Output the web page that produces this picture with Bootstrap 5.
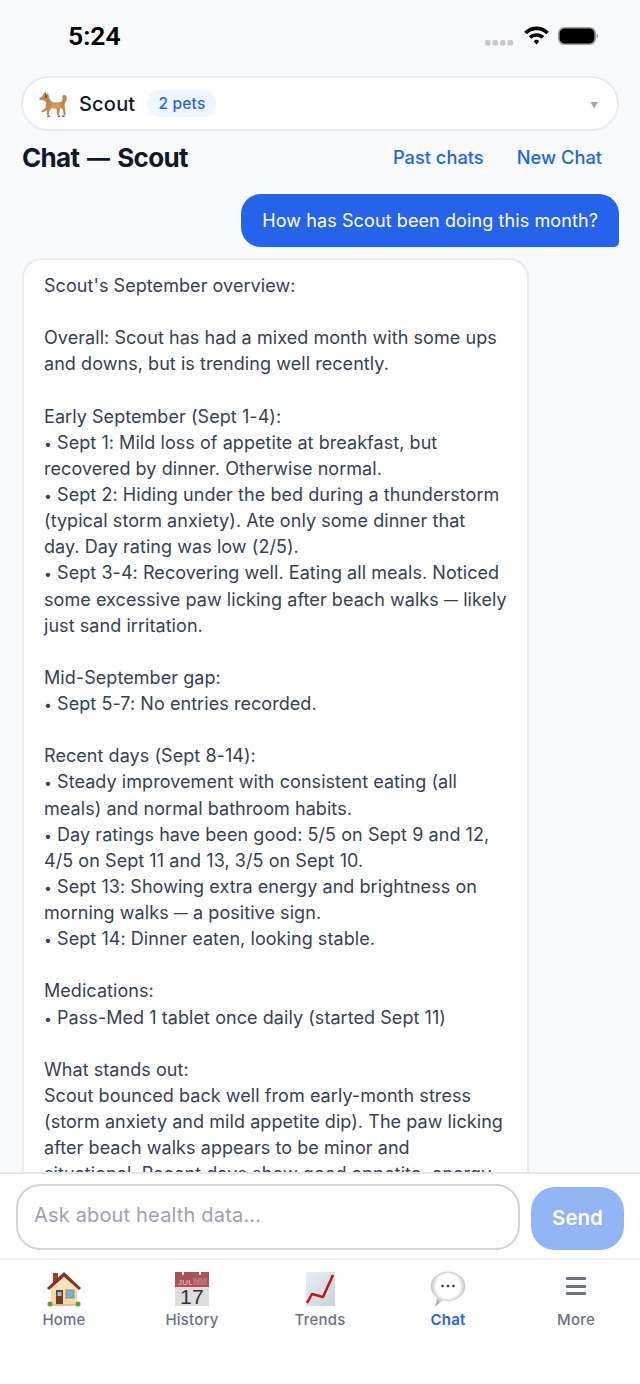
<!DOCTYPE html>
<html lang="en"><head><meta charset="utf-8">
<link href="https://cdn.jsdelivr.net/npm/bootstrap@5.3.0/dist/css/bootstrap.min.css" rel="stylesheet">
<style>
html,body{height:1384px;overflow:hidden}
body{font-family:Inter,"Liberation Sans",sans-serif;background:#f8fafc;color:#0f172a;width:640px}
.app-shell{height:1384px}
.status-bar{height:76px;padding:0 40px 0 68px}
.clock{font-size:26.5px;font-weight:600;color:#000;line-height:1;margin-top:23px;font-family:Roboto,Inter,sans-serif}
.status-icons{margin-top:24px}
.pet-pill{height:55px;margin:0 21px;background:#fff;border:2px solid #e8ebef;border-radius:28px;padding:0 18px 0 15px}
.pet-name{font-size:20px;font-weight:500;margin-left:11px;letter-spacing:.2px;color:#111827}
.pet-count{font-size:15.5px;font-weight:500;color:#2563eb;background:#eff6ff;border-radius:13px;padding:2px 11px;margin-left:12px;letter-spacing:.2px}
.caret{font-size:8px;color:#9ca3af;margin-right:1px;padding-top:2px}
.title-row{margin:0 38px 0 22px;height:54px}
.page-title{font-size:26px;font-weight:700;margin:0;color:#111827;letter-spacing:-.7px;word-spacing:2.4px}
.title-dash{font-size:23px;line-height:0;vertical-align:1px}
.head-link{font-size:18.3px;font-weight:500;color:#2563eb;text-decoration:none}
.head-gap{gap:33px}
.chat-scroll{flex:1 1 auto;min-height:0;overflow:hidden;padding:9px 21px 0 22px}
.user-bubble{background:#2563eb;color:#fff;font-size:18px;border-radius:20px 20px 5px 20px;padding:14px 21px 13px;line-height:26px;width:max-content;letter-spacing:.1px}
.bot-bubble{background:#fff;border:2px solid #e8ebef;border-radius:20px;width:507px;margin-top:11px;padding:13px 20px;font-size:18px;line-height:26.12px;color:#374151;white-space:pre;letter-spacing:.06px}
.dot{font-size:14px;line-height:0}
.emd{font-size:14px;line-height:0;vertical-align:1px}
.composer{height:88px;background:#fff;border-top:2px solid #e5e7eb;border-bottom:2px solid #f3f4f6;padding:0 16px}
.ask-field{width:504px;height:66px;margin-top:1px;border:2px solid #d1d5db;border-radius:24px;padding:0 16px 3px;font-size:20px;color:#9ca3af;display:flex;align-items:center;letter-spacing:.17px}
.send-btn{width:93px;height:63px;background:#93b4f5;color:#fff;border-radius:24px;font-size:20.5px;font-weight:600;margin-left:11px;margin-top:5px;display:flex;align-items:center;justify-content:center}
.tabbar{height:124px;background:#fff;padding:11px 0 0 0}
.tab-item{width:128px;font-size:15px;font-weight:500;color:#6b7280;line-height:18px;letter-spacing:.2px}
.tab-item svg{display:block;margin:0 auto 4px}
.tab-on{color:#2563eb;font-weight:600}
</style></head><body>
<div class="app-shell d-flex flex-column">
<div class="status-bar d-flex justify-content-between align-items-start flex-shrink-0">
 <div class="clock">5:24</div>
 <svg class="status-icons" width="116" height="28" viewBox="0 0 116 28">
  <g fill="#c8c8ca"><rect x="1" y="16" width="5.500" height="5.500" rx="1.500"/><rect x="8.500" y="16" width="5.500" height="5.500" rx="1.500"/><rect x="16" y="16" width="5.500" height="5.500" rx="1.500"/><rect x="23.500" y="16" width="5.500" height="5.500" rx="1.500"/></g>
  <g fill="none" stroke="#000" stroke-width="3.600"><path d="M41.500 9A15.500 15.500 0 0 1 63.500 9"/><path d="M46.100 13.600A9 9 0 0 1 58.900 13.600"/></g>
  <path d="M49.700 17.200L52.500 20.500 55.300 17.200A4 4 0 0 0 49.700 17.200z" fill="#000"/>
  <rect x="74.800" y="3.800" width="36.400" height="16.400" rx="5.500" fill="#000"/>
  <rect x="74.800" y="3.800" width="36.400" height="16.400" rx="5.500" fill="none" stroke="#a3a3a3" stroke-width="1.600"/>
  <path d="M112.600 9.500v5c.8-.4 1.300-1.300 1.300-2.500s-.5-2.100-1.300-2.500z" fill="#8f8f8f"/>
 </svg>
</div>
<div class="pet-pill d-flex align-items-center flex-shrink-0">
 <svg width="30" height="28" viewBox="0 0 30 28"><path d="M7 2l1.500 2.500L10 3l1.200 5 2.800 4c3.500.8 6 .8 8.500 0 1.500-.8 2.500-2.500 1.800-4.800-.4-1.300.8-2.700 2.500-2.200 2 .6 2.500 3 1.700 5-.5 1.500-1.500 3-2 4.500l.5 4 .8 6.500h-2l-1.300-6-2.300-1.500-1.300 7.500h-2l-.2-6-5-1.500-2.500 4-.5 3.500h-2l.2-5-4.200 2.500-1.500-1 4.300-3.700.7-5.500L6 10.500l-4-.5-.8-1.500L4 6.500z" fill="#c18a4f"/><path d="M7 2l1.500 2.500 1 4-2.500-.5z" fill="#8a5a2c"/><path d="M13 13c3 1 6 1 9 0l1 5-9 .5z" fill="#d19a5c"/><path d="M9.500 25.500h2.300v1.300H9zM20 25.500h2.300v1.300h-2.800zM24.300 25.500h2.300v1.300h-2.800z" fill="#5d3b1e"/></svg>
 <span class="pet-name">Scout</span>
 <span class="pet-count">2 pets</span>
 <span class="caret ms-auto">▼</span>
</div>
<div class="title-row d-flex justify-content-between align-items-center flex-shrink-0">
 <h1 class="page-title">Chat <span class="title-dash">—</span> Scout</h1>
 <div class="d-flex head-gap"><a class="head-link" href="#">Past chats</a><a class="head-link" href="#">New Chat</a></div>
</div>
<div class="chat-scroll">
 <div class="user-bubble ms-auto">How has Scout been doing this month?</div>
 <div class="bot-bubble">Scout's September overview:

Overall: Scout has had a mixed month with some ups
and downs, but is trending well recently.

Early September (Sept 1-4):
<span class="dot">•</span> Sept 1: Mild loss of appetite at breakfast, but
recovered by dinner. Otherwise normal.
<span class="dot">•</span> Sept 2: Hiding under the bed during a thunderstorm
(typical storm anxiety). Ate only some dinner that
day. Day rating was low (2/5).
<span class="dot">•</span> Sept 3-4: Recovering well. Eating all meals. Noticed
some excessive paw licking after beach walks <span class="emd">—</span> likely
just sand irritation.

Mid-September gap:
<span class="dot">•</span> Sept 5-7: No entries recorded.

Recent days (Sept 8-14):
<span class="dot">•</span> Steady improvement with consistent eating (all
meals) and normal bathroom habits.
<span class="dot">•</span> Day ratings have been good: 5/5 on Sept 9 and 12,
4/5 on Sept 11 and 13, 3/5 on Sept 10.
<span class="dot">•</span> Sept 13: Showing extra energy and brightness on
morning walks <span class="emd">—</span> a positive sign.
<span class="dot">•</span> Sept 14: Dinner eaten, looking stable.

Medications:
<span class="dot">•</span> Pass-Med 1 tablet once daily (started Sept 11)

What stands out:
Scout bounced back well from early-month stress
(storm anxiety and mild appetite dip). The paw licking
after beach walks appears to be minor and
situational. Recent days show good appetite, energy</div>
</div>
<div class="composer d-flex align-items-center flex-shrink-0">
 <div class="ask-field">Ask about health data...</div>
 <div class="send-btn">Send</div>
</div>
<div class="tabbar d-flex flex-shrink-0 text-center">
 <div class="tab-item"><svg width="34" height="36" viewBox="0 0 34 36"><rect x="4" y="14" width="26" height="20" fill="#f1d9a8"/><rect x="6" y="2" width="5" height="10" fill="#a83a2c"/><path d="M17 1L0 17l2 2L17 6l15 13 2-2z" fill="#8f2f24"/><path d="M17 6L5 17v3h24v-3z" fill="#f6e3bd"/><rect x="9" y="19" width="7" height="15" fill="#7a3b22"/><rect x="10.500" y="21" width="4" height="4" fill="#8fc4e6"/><rect x="19" y="19" width="8" height="8" fill="#6fb1df" stroke="#a9895a"/><rect x="3" y="33" width="28" height="2" fill="#d9c08c"/><circle cx="3" cy="33" r="2.500" fill="#5d9a3a"/><circle cx="31" cy="33" r="2.500" fill="#5d9a3a"/></svg>Home</div>
 <div class="tab-item"><svg width="36" height="36" viewBox="0 0 36 36"><rect x="1" y="1" width="34" height="34" fill="#dedede"/><rect x="1" y="1" width="34" height="15" fill="#a9525a"/><path d="M9 1v3M26 1v3" stroke="#f2f2f2" stroke-width="2"/><path d="M20 7v7M22 7v7M24 7v7M26 7v7M28 7v7M30 7v7M32 7v7" stroke="#c98a90"/><text x="4" y="14" font-size="8" fill="#e8cccc" font-family="Liberation Sans">JUL</text><text x="18" y="33" text-anchor="middle" font-size="21" fill="#333" font-family="Liberation Sans">17</text></svg>History</div>
 <div class="tab-item"><svg width="36" height="36" viewBox="0 0 36 36"><defs><linearGradient id="cg" x1="0" y1="0" x2="1" y2="1"><stop offset="0" stop-color="#e8edf2"/><stop offset="1" stop-color="#c9d3dd"/></linearGradient></defs><rect x="4" y="1" width="29" height="34" fill="url(#cg)"/><path d="M5 32l5-9 11 3 10-22" fill="none" stroke="#c0141a" stroke-width="2.500" stroke-linejoin="round"/></svg>Trends</div>
 <div class="tab-item tab-on"><svg width="36" height="36" viewBox="0 0 36 36"><defs><radialGradient id="bg" cx=".5" cy=".42" r=".62"><stop offset=".55" stop-color="#fff"/><stop offset="1" stop-color="#8f949c"/></radialGradient></defs><path d="M18 1c9.500 0 17 6.300 17 14s-7.500 14.500-17 14.500c-1.800 0-3.500-.2-5-.7L5.500 35l2-8.500C3.500 23.500 1 19.500 1 15 1 7.300 8.500 1 18 1z" fill="url(#bg)" stroke="#c5c8cd" stroke-width=".8"/><g fill="#333"><circle cx="12.500" cy="15" r="1.300"/><circle cx="18" cy="15" r="1.300"/><circle cx="23.500" cy="15" r="1.300"/></g></svg>Chat</div>
 <div class="tab-item"><svg width="22" height="36" viewBox="0 0 22 36"><g fill="#6b7280"><rect x="1" y="6" width="20" height="3" rx="1"/><rect x="1" y="14" width="20" height="3" rx="1"/><rect x="1" y="21" width="20" height="3" rx="1"/></g></svg>More</div>
</div>
</div>
<script src="https://cdn.jsdelivr.net/npm/bootstrap@5.3.0/dist/js/bootstrap.bundle.min.js"></script>
</body></html>
